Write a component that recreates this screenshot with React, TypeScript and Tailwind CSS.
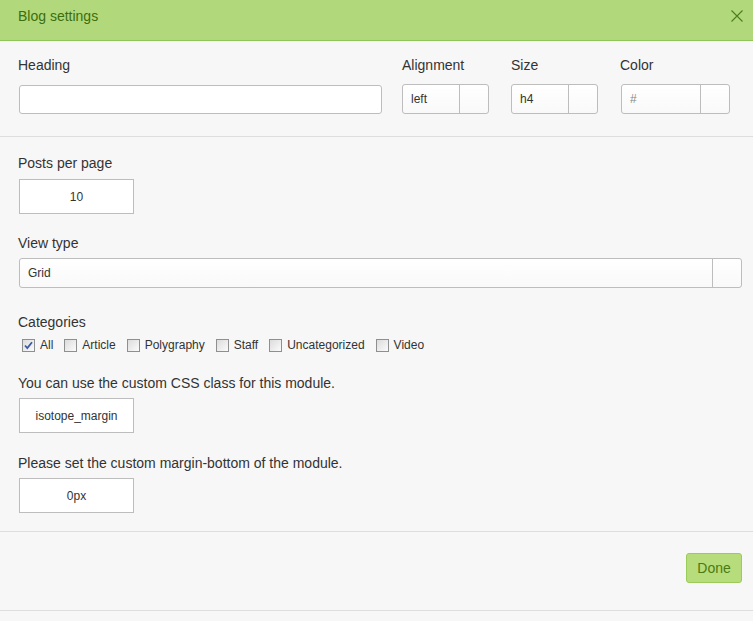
import React from "react";

const font = { fontFamily: '"Liberation Sans", Arial, sans-serif' };

function Check({ checked }: { checked?: boolean }) {
  return (
    <span className="relative inline-block w-[13px] h-[13px] border border-[#8e8f8f] bg-gradient-to-br from-[#dcdcdc] to-[#fbfbfb] shrink-0">
      {checked && (
        <svg className="absolute left-[0px] top-[0px]" width="11" height="11" viewBox="0 0 11 11">
          <path d="M2 5.5 L4.3 8 L9 2.2" fill="none" stroke="#3d5aa8" strokeWidth="1.8" />
        </svg>
      )}
    </span>
  );
}

function SelectBox({ value, width, sep, muted }: { value: string; width: string; sep: string; muted?: boolean }) {
  return (
    <div className={`flex h-[30px] ${width} rounded-[3px] border border-[#bdbdbd] bg-gradient-to-b from-white to-[#f9f9f9]`}>
      <div className={`flex items-center pl-[8px] ${sep} border-r border-[#bdbdbd] text-[12px] ${muted ? "text-[#888]" : "text-[#333]"}`}>{value}</div>
      <div className="flex-1" />
    </div>
  );
}

function Label({ children, className = "" }: { children: React.ReactNode; className?: string }) {
  return <div className={`text-[14px] leading-[20px] text-[#333] ${className}`}>{children}</div>;
}

function SmallInput({ value }: { value: string }) {
  return (
    <div className="w-[115px] h-[35px] border border-[#bdbdbd] bg-white flex items-center justify-center text-[12px] text-[#333]">
      {value}
    </div>
  );
}

export default function App() {
  const cats = [
    { name: "All", checked: true },
    { name: "Article" },
    { name: "Polygraphy" },
    { name: "Staff" },
    { name: "Uncategorized" },
    { name: "Video" },
  ];
  return (
    <div style={font} className="w-[753px] h-[621px] bg-[#f7f7f7] overflow-hidden">
      <div className="h-[41px] bg-[#b1d97b] border-b border-[#90c55a] flex items-start justify-between pl-[18px] pr-[10px] pt-[6px]">
        <span className="text-[14px] leading-[20px] text-[#3d6e0c]">Blog settings</span>
        <svg width="12" height="12" viewBox="0 0 12 12" className="mt-[4px]">
          <path d="M0.5 0.5 L11.5 11.5 M11.5 0.5 L0.5 11.5" stroke="#4d7d1c" strokeWidth="1.1" />
        </svg>
      </div>

      <div className="flex px-[18px] pt-[14px] pb-[22px] border-b border-[#dedede]">
        <div className="w-[364px]">
          <Label>Heading</Label>
          <div className="mt-[10px] ml-[1px] h-[29px] rounded-[3px] border border-[#bdbdbd] bg-white" />
        </div>
        <div className="ml-[20px]">
          <Label>Alignment</Label>
          <div className="mt-[9px]">
            <SelectBox value="left" width="w-[87px]" sep="w-[57px]" />
          </div>
        </div>
        <div className="ml-[22px]">
          <Label>Size</Label>
          <div className="mt-[9px]">
            <SelectBox value="h4" width="w-[87px]" sep="w-[57px]" />
          </div>
        </div>
        <div className="ml-[22px]">
          <Label>Color</Label>
          <div className="mt-[9px] ml-[1px]">
            <SelectBox value="#" width="w-[109px]" sep="w-[79px]" muted />
          </div>
        </div>
      </div>

      <div className="px-[18px] pt-[16px] pb-[18px] border-b border-[#dedede]">
        <Label>Posts per page</Label>
        <div className="mt-[6px] ml-[1px]">
          <SmallInput value="10" />
        </div>

        <Label className="mt-[19px]">View type</Label>
        <div className="mt-[5px] ml-[1px] mr-[-7px] h-[30px] flex rounded-[3px] border border-[#bdbdbd] bg-gradient-to-b from-white to-[#f9f9f9]">
          <div className="flex-1 flex items-center pl-[8px] text-[12px] text-[#333] border-r border-[#bdbdbd]">Grid</div>
          <div className="w-[28px]" />
        </div>

        <Label className="mt-[24px]">Categories</Label>
        <div className="mt-[3px] h-[20px] flex items-center pl-[4px]">
          {cats.map((c, i) => (
            <div key={c.name} className={`flex items-center ${i > 0 ? "ml-[11px]" : ""}`}>
              <Check checked={c.checked} />
              <span className="ml-[5px] text-[12px] text-[#333]">{c.name}</span>
            </div>
          ))}
        </div>

        <Label className="mt-[18px]">You can use the custom CSS class for this module.</Label>
        <div className="mt-[5px] ml-[1px]">
          <SmallInput value="isotope_margin" />
        </div>

        <Label className="mt-[20px]">Please set the custom margin-bottom of the module.</Label>
        <div className="mt-[5px] ml-[1px]">
          <SmallInput value="0px" />
        </div>
      </div>

      <div className="flex justify-end pr-[11px] pt-[21px] pb-[27px] border-b border-[#dedede]">
        <button className="h-[30px] w-[56px] rounded-[3px] bg-[#b7dc7b] border border-[#9acb5b] text-[14px] text-[#4a7b12]">
          Done
        </button>
      </div>
    </div>
  );
}
